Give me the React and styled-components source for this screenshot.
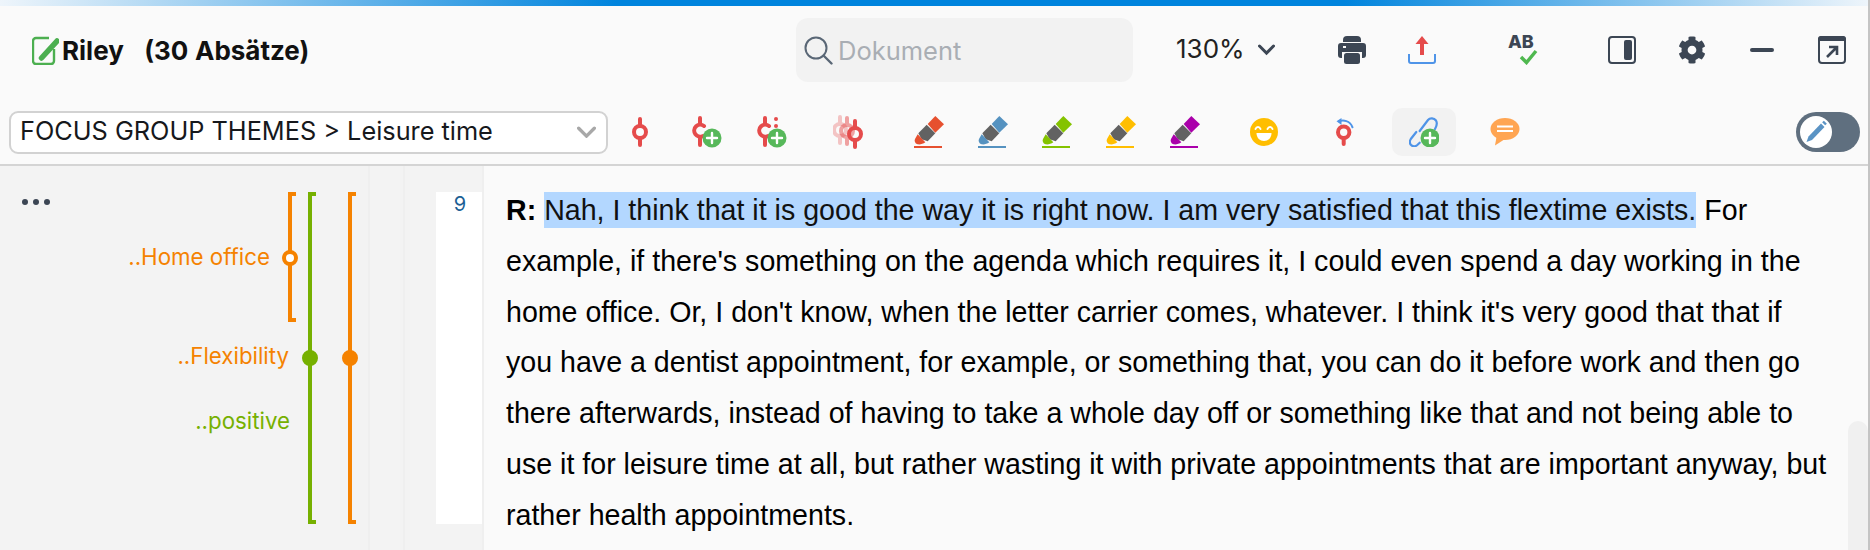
import React from "react";
import styled, { createGlobalStyle } from "styled-components";
import { FaCog } from "react-icons/fa";

const GlobalStyle = createGlobalStyle`
	html, body {
		margin: 0;
		padding: 0;
		background: #fafafa;
	}
	body {
		font-family: Inter, "Liberation Sans", sans-serif;
		overflow: hidden;
	}
`;

const colors = {
	red: "#e54b4b",
	green: "#57b85a",
	blue: "#4f94e8",
	slate: "#3c4654",
	orange: "#f58200",
	lime: "#76b000"
};

const Page = styled.div`
	width: 1870px;
	height: 550px;
	display: flex;
	flex-direction: column;
	overflow: hidden;
	background: #fafafa;
	box-sizing: border-box;
	border-right: 2px solid #c4c4c4;
`;

const ProgressBar = styled.div`
	height: 6px;
	flex: none;
	background: linear-gradient(90deg, #eef5fb 0%, #0084dd 33%, #0084dd 72%, #eef5fb 100%);
`;

const TitleBar = styled.header`
	height: 94px;
	flex: none;
	display: flex;
	align-items: center;
	padding: 0 0 6px 32px;
	box-sizing: border-box;
`;

const Title = styled.h1`
	display: flex;
	align-items: center;
	gap: 3px;
	margin: 0;
	width: 764px;
	flex: none;
	font-size: 26px;
	font-weight: 700;
	word-spacing: 0.6px;
	color: #111;
	white-space: pre;
`;

const SearchBox = styled.div`
	width: 337px;
	height: 64px;
	flex: none;
	display: flex;
	align-items: center;
	gap: 5px;
	padding-left: 8px;
	box-sizing: border-box;
	border-radius: 12px;
	background: #f2f2f2;
	font-size: 25.5px;
	color: #a9aeb4;
`;

const Zoom = styled.div`
	width: 99px;
	flex: none;
	display: flex;
	align-items: center;
	justify-content: space-between;
	margin-left: 43px;
	font-size: 26px;
	color: #222;
`;

const ZoomValue = styled.span`
	padding-bottom: 4px;
`;

const Tool = styled.span`
	display: flex;
	flex: none;
	align-items: center;
	justify-content: center;
	width: ${(p) => p.$w}px;
	margin-left: ${(p) => p.$gap || 0}px;
`;

const Toolbar = styled.div`
	height: 64px;
	flex: none;
	display: flex;
	align-items: center;
	padding-left: 9px;
	box-sizing: border-box;
`;

const CodeSelect = styled.div`
	width: 599px;
	height: 43px;
	flex: none;
	display: flex;
	align-items: center;
	justify-content: space-between;
	padding: 0 10px 0 9px;
	box-sizing: border-box;
	border: 2px solid #d2d2d2;
	border-radius: 9px;
	background: #fff;
	font-size: 25.3px;
	color: #16181c;
`;

const SelectValue = styled.span`
	padding-bottom: 3px;
`;

const ActiveTool = styled(Tool)`
	height: 48px;
	border-radius: 10px;
	background: #f2f2f2;
`;

const Toggle = styled.span`
	width: 64px;
	height: 40px;
	flex: none;
	display: flex;
	align-items: center;
	margin-left: 276px;
	padding-left: 4px;
	box-sizing: border-box;
	border-radius: 20px;
	background: #5f6f7f;
`;

const ToggleKnob = styled.span`
	width: 32px;
	height: 32px;
	display: flex;
	align-items: center;
	justify-content: center;
	border-radius: 50%;
	background: #fff;
`;

const Workspace = styled.main`
	flex: 1;
	min-height: 0;
	display: flex;
	border-top: 2px solid #d4d4d4;
`;

const Margin = styled.aside`
	width: 368px;
	flex: none;
	position: relative;
	background: #f3f3f3;
`;

const Dots = styled.span`
	position: absolute;
	left: 22px;
	top: 33px;
	display: flex;
	gap: 5px;

	i {
		width: 6px;
		height: 6px;
		border-radius: 50%;
		background: ${colors.slate};
	}
`;

const Bracket = styled.span`
	position: absolute;
	left: ${(p) => p.$x}px;
	top: ${(p) => p.$top}px;
	width: 8px;
	height: ${(p) => p.$h}px;
	box-sizing: border-box;
	border-left: 4px solid ${(p) => p.$color};
	border-top: 4px solid ${(p) => p.$color};
	border-bottom: 4px solid ${(p) => p.$color};
`;

const Knot = styled.span`
	position: absolute;
	left: ${(p) => p.$x - 8}px;
	top: ${(p) => p.$y - 8}px;
	width: 16px;
	height: 16px;
	box-sizing: border-box;
	border-radius: 50%;
	border: ${(p) => (p.$hollow ? 4 : 8)}px solid ${(p) => p.$color};
	background: #fff;
`;

const CodeLabel = styled.span`
	position: absolute;
	right: ${(p) => 368 - p.$right}px;
	top: ${(p) => p.$y - 16}px;
	font-size: 22.3px;
	line-height: 28px;
	color: ${(p) => p.$color};
	white-space: nowrap;
`;

const Rail = styled.div`
	width: ${(p) => p.$w}px;
	flex: none;
	box-sizing: border-box;
	border-left: 2px solid #efefef;
	background: #f3f3f3;
`;

const NumberRail = styled.div`
	width: 48px;
	flex: none;
	box-sizing: border-box;
	border-right: 2px solid #efefef;
	background: #f3f3f3;
`;

const NumberCell = styled.div`
	height: 332px;
	margin-top: 26px;
	padding-left: 2px;
	box-sizing: border-box;
	background: #fff;
	text-align: center;
	font-size: 20px;
	line-height: 24px;
	color: #1c5f95;
`;

const Reader = styled.article`
	flex: 1;
	min-width: 0;
	position: relative;
	padding: 19px 0 0 22px;
	background: #fafafa;
`;

const Paragraph = styled.p`
	margin: 0;
	width: 1325px;
	font-family: "Liberation Sans", Arial, sans-serif;
	font-size: 28.6px;
	line-height: 50.8px;
	color: #000;
`;

const Speaker = styled.b`
	font-weight: 700;
`;

const Selected = styled.span`
	padding: 2px 0;
	background: #b3d7ff;
	color: #111;
`;

const ScrollThumb = styled.span`
	position: absolute;
	right: 0;
	top: 255px;
	bottom: 0;
	width: 20px;
	border-radius: 10px 10px 0 0;
	background: #f0f0f0;
`;

const CodeMark = ({ color = colors.red, opacity = 1 }) => (
	<g stroke={color} strokeWidth="4" fill="none" strokeLinecap="round" opacity={opacity}>
		<path d="M8 2v7M8 21v7" />
		<circle cx="8" cy="15" r="6" />
	</g>
);

const PlusBadge = ({ x, y }) => (
	<g>
		<circle cx={x} cy={y} r="9.5" fill={colors.green} />
		<path d={`M${x - 5} ${y}h10M${x} ${y - 5}v10`} stroke="#fff" strokeWidth="2.4" strokeLinecap="round" />
	</g>
);

const CodeIcon = () => (
	<svg width="16" height="30" viewBox="0 0 16 30">
		<CodeMark />
	</svg>
);

const CodePlusIcon = ({ dotted }) => (
	<svg width="30" height="32" viewBox="0 0 30 32">
		<g stroke={colors.red} strokeWidth="4" fill="none" strokeLinecap="round">
			<path d="M8 2v6M8 22v7" />
			<path d="M12 10a6 6 0 1 0 -1 10" />
		</g>
		{dotted && (
			<g fill={colors.red}>
				<circle cx="19" cy="3" r="2" />
				<circle cx="19" cy="10" r="2" />
			</g>
		)}
		<PlusBadge x={20} y={22} />
	</svg>
);

const CodeStackIcon = () => (
	<svg width="30" height="34" viewBox="0 0 30 34">
		<g transform="translate(-1 0)">
			<CodeMark opacity={0.3} />
		</g>
		<g transform="translate(6 1)">
			<CodeMark opacity={0.5} />
		</g>
		<g transform="translate(14 4)">
			<CodeMark />
		</g>
	</svg>
);

const HighlightIcon = ({ color }) => (
	<svg width="30" height="32" viewBox="0 0 30 32">
		<path d="M21.3 0L30 8.3 21.3 16.7 13.7 8z" fill={color} />
		<path d="M12.7 8.7L21.300 17.300 13.700 25.300 7.700 23.300 4.300 17.300z" fill="#626262" />
		<path d="M3.700 18.300L11.300 26.300C9 28 6 28.800 3.500 28.300 1 27.500 0 25 1 23z" fill={color} />
		<rect x="0" y="30" width="28" height="2" fill={color} />
	</svg>
);

const SmileIcon = () => (
	<svg width="28" height="28" viewBox="0 0 28 28">
		<circle cx="14" cy="14" r="14" fill="#ffbe00" />
		<path d="M5.500 11c1-2.600 4-2.600 5 0M17.500 11c1-2.600 4-2.600 5 0" stroke="#fff" strokeWidth="2" fill="none" strokeLinecap="round" />
		<path d="M6.500 15h15c0 5-3.500 8-7.500 8s-7.500-3-7.500-8z" fill="#fff" />
	</svg>
);

const RecodeIcon = () => (
	<svg width="18" height="28" viewBox="0 0 18 28">
		<path d="M3 3.300c4-1.500 11-1 13.500 6" stroke={colors.blue} strokeWidth="2" fill="none" strokeLinecap="round" />
		<path d="M5.500 0L0.500 3.300 5.500 7z" fill={colors.blue} />
		<circle cx="7.700" cy="14.300" r="5.700" stroke={colors.red} strokeWidth="4" fill="none" />
		<path d="M7.700 20v6" stroke={colors.red} strokeWidth="4" strokeLinecap="round" />
	</svg>
);

const LinkPlusIcon = () => (
	<svg width="30" height="30" viewBox="0 0 30 30">
		<g stroke={colors.blue} strokeWidth="2.200" fill="none" strokeLinecap="round">
			<path d="M10.700 14L19 3c2-2.500 6-2.200 8 .500 1.300 2.200 1 5-1 8.500" />
			<path d="M7.300 15L1.800 22c-1.500 2.400-1 5 .800 6.500 2 1.200 4.200.800 5.700-.500l2.400-2.300" />
		</g>
		<PlusBadge x={21} y={21} />
	</svg>
);

const CommentIcon = () => (
	<svg width="30" height="28" viewBox="0 0 30 28">
		<ellipse cx="15" cy="11" rx="14.500" ry="11" fill="#ffa552" />
		<path d="M6.500 19L5 27.500 15 21z" fill="#ffa552" />
		<path d="M7 8.500h16M7 13h16" stroke="#fff" strokeWidth="2.200" />
	</svg>
);

const EditGlyph = () => (
	<svg width="24" height="24" viewBox="0 0 24 24">
		<path d="M17 3.500l3.500 3.500L8 20l-5.500 2 2-5.500z" fill="#5a93c4" />
		<path d="M19 1.500l3 3" stroke="#5a93c4" strokeWidth="2.400" />
	</svg>
);

const NoteIcon = () => (
	<svg width="27" height="29" viewBox="0 0 27 29">
		<path d="M17 2H4a3 3 0 0 0-3 3v20a3 3 0 0 0 3 3h15a3 3 0 0 0 3-3V13" stroke="#4caf50" strokeWidth="2.400" fill="none" />
		<path d="M9.500 22L25 5" stroke="#4caf50" strokeWidth="5.500" strokeLinecap="round" />
	</svg>
);

const SearchIcon = () => (
	<svg width="29" height="29" viewBox="0 0 29 29">
		<circle cx="12" cy="12" r="10.500" stroke="#5a6776" strokeWidth="2" fill="none" />
		<path d="M19.500 19.500l8 8" stroke="#5a6776" strokeWidth="2.400" strokeLinecap="round" />
	</svg>
);

const ChevronDown = ({ size = 17, color = colors.slate, width = 3 }) => (
	<svg width={size} height={size * 0.65} viewBox="0 0 17 11">
		<path d="M1.500 2l7 7 7-7" stroke={color} strokeWidth={width} fill="none" strokeLinecap="round" />
	</svg>
);

const PrinterIcon = () => (
	<svg width="28" height="28" viewBox="0 0 28 28">
		<path d="M5 6V4a4 4 0 0 1 4-4h10a4 4 0 0 1 4 4v2z" fill={colors.slate} />
		<path d="M3 7h22a3 3 0 0 1 3 3v9a3 3 0 0 1-3 3h-1v-6H4v6H3a3 3 0 0 1-3-3v-9a3 3 0 0 1 3-3z" fill={colors.slate} />
		<rect x="5" y="10" width="3" height="2" fill="#fafafa" />
		<rect x="6" y="17" width="16" height="11" rx="2.500" fill={colors.slate} />
	</svg>
);

const UploadIcon = () => (
	<svg width="28" height="28" viewBox="0 0 28 28">
		<path d="M14 0l6.500 8H16v11h-4V8H7.500z" fill={colors.red} />
		<path d="M1 18v7a2 2 0 0 0 2 2h22a2 2 0 0 0 2-2v-7" stroke={colors.blue} strokeWidth="2" fill="none" />
	</svg>
);

const SpellMark = styled.span`
	position: relative;
	display: block;
	width: 30px;
	height: 30px;
	font-size: 18px;
	font-weight: 800;
	line-height: 14px;
	letter-spacing: -0.2px;
	color: ${colors.slate};

	svg {
		position: absolute;
		right: 0;
		bottom: 0;
	}
`;

const PanelIcon = () => (
	<svg width="28" height="28" viewBox="0 0 28 28">
		<rect x="1" y="1" width="26" height="26" rx="3" stroke={colors.slate} strokeWidth="2" fill="none" />
		<rect x="16" y="4" width="8" height="20" rx="2" fill={colors.slate} />
	</svg>
);

const MinusIcon = () => (
	<svg width="24" height="5" viewBox="0 0 24 5">
		<rect width="24" height="4" rx="2" fill={colors.slate} />
	</svg>
);

const PopOutIcon = () => (
	<svg width="28" height="28" viewBox="0 0 28 28">
		<path d="M3 0h22a3 3 0 0 1 3 3v2H0V3a3 3 0 0 1 3-3z" fill={colors.slate} />
		<rect x="1" y="1" width="26" height="26" rx="3" stroke={colors.slate} strokeWidth="2" fill="none" />
		<path d="M9 21l9-9M11 11h8v8" stroke={colors.slate} strokeWidth="2.600" fill="none" />
	</svg>
);

const App = () => (
	<>
		<GlobalStyle />
		<Page>
			<ProgressBar />
			<TitleBar>
				<Title>
					<NoteIcon />
					<span>Riley{"   "}(30 Absätze)</span>
				</Title>
				<SearchBox>
					<SearchIcon />
					Dokument
				</SearchBox>
				<Zoom>
					<ZoomValue>130%</ZoomValue>
					<ChevronDown />
				</Zoom>
				<Tool $w={28} $gap={63}>
					<PrinterIcon />
				</Tool>
				<Tool $w={28} $gap={42}>
					<UploadIcon />
				</Tool>
				<Tool $w={30} $gap={72}>
					<SpellMark>
						AB
						<svg width="19" height="16" viewBox="0 0 19 16">
							<path d="M2 8l5.500 5.500L17 2" stroke="#4fb84f" strokeWidth="3.500" fill="none" />
						</svg>
					</SpellMark>
				</Tool>
				<Tool $w={28} $gap={70}>
					<PanelIcon />
				</Tool>
				<Tool $w={28} $gap={42}>
					<FaCog size={28} color={colors.slate} />
				</Tool>
				<Tool $w={24} $gap={44}>
					<MinusIcon />
				</Tool>
				<Tool $w={28} $gap={44}>
					<PopOutIcon />
				</Tool>
			</TitleBar>
			<Toolbar>
				<CodeSelect>
					<SelectValue>FOCUS GROUP THEMES &gt; Leisure time</SelectValue>
					<ChevronDown size={19} color="#a8a8a8" />
				</CodeSelect>
				<Tool $w={16} $gap={24}>
					<CodeIcon />
				</Tool>
				<Tool $w={30} $gap={44}>
					<CodePlusIcon />
				</Tool>
				<Tool $w={30} $gap={35}>
					<CodePlusIcon dotted />
				</Tool>
				<Tool $w={30} $gap={46}>
					<CodeStackIcon />
				</Tool>
				<Tool $w={30} $gap={51}>
					<HighlightIcon color="#e6502f" />
				</Tool>
				<Tool $w={30} $gap={34}>
					<HighlightIcon color="#5592c0" />
				</Tool>
				<Tool $w={30} $gap={34}>
					<HighlightIcon color="#84c300" />
				</Tool>
				<Tool $w={30} $gap={34}>
					<HighlightIcon color="#ffbe00" />
				</Tool>
				<Tool $w={30} $gap={34}>
					<HighlightIcon color="#aa00aa" />
				</Tool>
				<Tool $w={28} $gap={50}>
					<SmileIcon />
				</Tool>
				<Tool $w={18} $gap={58}>
					<RecodeIcon />
				</Tool>
				<ActiveTool $w={64} $gap={38}>
					<LinkPlusIcon />
				</ActiveTool>
				<Tool $w={30} $gap={34}>
					<CommentIcon />
				</Tool>
				<Toggle>
					<ToggleKnob>
						<EditGlyph />
					</ToggleKnob>
				</Toggle>
			</Toolbar>
			<Workspace>
				<Margin>
					<Dots>
						<i />
						<i />
						<i />
					</Dots>
					<Bracket $x={288} $top={26} $h={130} $color={colors.orange} />
					<Bracket $x={308} $top={26} $h={332} $color={colors.lime} />
					<Bracket $x={348} $top={26} $h={332} $color={colors.orange} />
					<Knot $x={290} $y={92} $color={colors.orange} $hollow />
					<Knot $x={310} $y={192} $color={colors.lime} />
					<Knot $x={350} $y={192} $color={colors.orange} />
					<CodeLabel $right={270} $y={93} $color={colors.orange}>
						..Home office
					</CodeLabel>
					<CodeLabel $right={289} $y={192} $color={colors.orange}>
						..Flexibility
					</CodeLabel>
					<CodeLabel $right={290} $y={257} $color={colors.lime}>
						..positive
					</CodeLabel>
				</Margin>
				<Rail $w={35} />
				<Rail $w={33} />
				<NumberRail>
					<NumberCell>9</NumberCell>
				</NumberRail>
				<Reader>
					<Paragraph>
						<Speaker>R:</Speaker>{" "}
						<Selected>Nah, I think that it is good the way it is right now. I am very satisfied that this flextime exists.</Selected>{" "}
						For example, if there's something on the agenda which requires it, I could even spend a day working in the home office. Or, I don't know, when the letter carrier comes, whatever. I think it's very good that that if you have a dentist appointment, for example, or something that, you can do it before work and then go there afterwards, instead of having to take a whole day off or something like that and not being able to use it for leisure time at all, but rather wasting it with private appointments that are important anyway, but rather health appointments.
					</Paragraph>
					<ScrollThumb />
				</Reader>
			</Workspace>
		</Page>
	</>
);

export default App;
